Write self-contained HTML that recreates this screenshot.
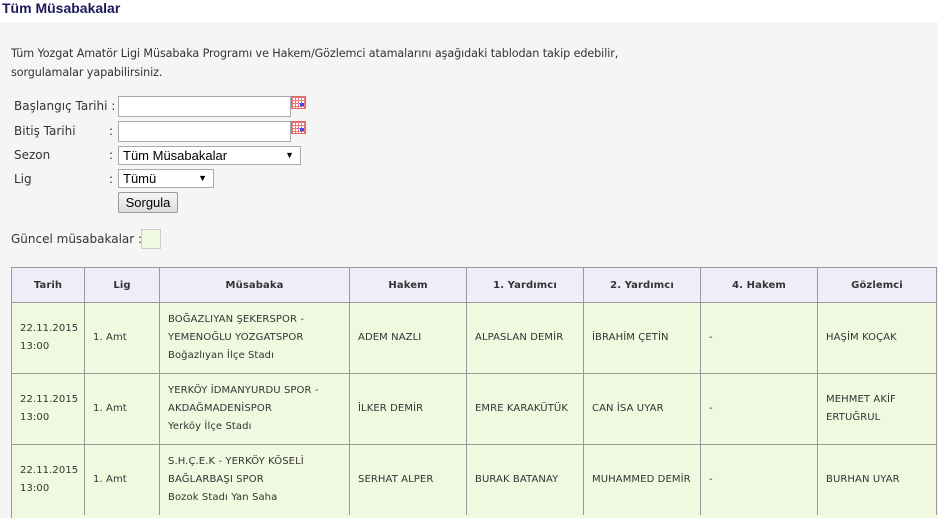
<!DOCTYPE html>
<html style="width:938px;height:518px;overflow:hidden"><head><meta charset="utf-8"><style>
body{margin:0;width:938px;height:518px;overflow:hidden;background:#f5f5f5;font-family:"DejaVu Sans",Verdana,sans-serif;color:#333;position:relative}
.top{position:absolute;left:0;top:0;width:938px;height:22px;background:#fff}
.title{position:absolute;left:2px;top:0px;font:bold 14px "Liberation Sans",Arial,sans-serif;color:#1a1a5e}
.intro{position:absolute;left:11px;top:44px;font-size:11.2px;line-height:19px;color:#333;letter-spacing:-0.1px}
.lab{position:absolute;font-size:12px;color:#333}
.inp{position:absolute;background:#fff;border:1px solid #aaa;box-sizing:border-box}
.sel{position:absolute;background:#fff;border:1px solid #aaa;box-sizing:border-box;font:13px "Liberation Sans",Arial,sans-serif;color:#000;padding:1px 0 0 4px}
.sel span{position:absolute;right:6px;top:3px;font-size:9px}
.cal{position:absolute;width:15px;height:13px;box-sizing:border-box;border:1px solid #d66;background:#fff;background-image:repeating-linear-gradient(90deg,#e77 0 1px,transparent 1px 3px),repeating-linear-gradient(#e77 0 1px,transparent 1px 3px)}
.cal:after{content:"";position:absolute;right:1px;bottom:2px;width:4px;height:3px;background:#44f}
.btn{position:absolute;left:118px;top:192px;width:60px;height:21px;box-sizing:border-box;border:1px solid #999;background:linear-gradient(#f7f7f7,#ddd);font:13px "Liberation Sans",Arial,sans-serif;text-align:center;line-height:19px;border-radius:2px;color:#000}
table{position:absolute;left:11px;top:267px;width:925px;border-collapse:collapse;table-layout:fixed;font-size:10px}
td,th{border:1px solid #999;padding:0 8px;letter-spacing:0.1px;white-space:nowrap;overflow:hidden}
th{background:#eeeefa;height:34px;font-weight:bold;text-align:center;color:#333}
td{background:#f0f8e0;height:70px;line-height:18px;text-align:left;vertical-align:middle}
</style></head><body>
<div class="top"></div>
<div class="title">Tüm Müsabakalar</div>
<div class="intro">Tüm Yozgat Amatör Ligi Müsabaka Programı ve Hakem/Gözlemci atamalarını aşağıdaki tablodan takip edebilir,<br>sorgulamalar yapabilirsiniz.</div>
<div class="lab" style="left:14px;top:99px">Başlangıç Tarihi :</div>
<div class="inp" style="left:118px;top:96px;width:173px;height:21px"></div>
<div class="cal" style="left:291px;top:96px"></div>
<div class="lab" style="left:14px;top:124px">Bitiş Tarihi</div><div class="lab" style="left:109px;top:124px">:</div>
<div class="inp" style="left:118px;top:121px;width:173px;height:21px"></div>
<div class="cal" style="left:291px;top:121px"></div>
<div class="lab" style="left:14px;top:148px">Sezon</div><div class="lab" style="left:109px;top:148px">:</div>
<div class="sel" style="left:118px;top:146px;width:183px;height:19px">Tüm Müsabakalar<span>▼</span></div>
<div class="lab" style="left:14px;top:172px">Lig</div><div class="lab" style="left:109px;top:172px">:</div>
<div class="sel" style="left:118px;top:169px;width:96px;height:19px">Tümü<span>▼</span></div>
<div class="btn">Sorgula</div>
<div class="lab" style="left:11px;top:232px">Güncel müsabakalar :</div>
<div style="position:absolute;left:141px;top:229px;width:20px;height:20px;box-sizing:border-box;border:1px solid #ccc;background:#f0f8e0"></div>
<table>
<colgroup><col style="width:73px"><col style="width:75px"><col style="width:190px"><col style="width:117px"><col style="width:117px"><col style="width:117px"><col style="width:117px"><col style="width:119px"></colgroup>
<tr><th>Tarih</th><th>Lig</th><th>Müsabaka</th><th>Hakem</th><th>1. Yardımcı</th><th>2. Yardımcı</th><th>4. Hakem</th><th>Gözlemci</th></tr>
<tr><td>22.11.2015<br>13:00</td><td>1. Amt</td><td>BOĞAZLIYAN ŞEKERSPOR -<br>YEMENOĞLU YOZGATSPOR<br>Boğazlıyan İlçe Stadı</td><td>ADEM NAZLI</td><td>ALPASLAN DEMİR</td><td>İBRAHİM ÇETİN</td><td>-</td><td>HAŞİM KOÇAK</td></tr>
<tr><td>22.11.2015<br>13:00</td><td>1. Amt</td><td>YERKÖY İDMANYURDU SPOR -<br>AKDAĞMADENİSPOR<br>Yerköy İlçe Stadı</td><td>İLKER DEMİR</td><td>EMRE KARAKÜTÜK</td><td>CAN İSA UYAR</td><td>-</td><td>MEHMET AKİF<br>ERTUĞRUL</td></tr>
<tr><td>22.11.2015<br>13:00</td><td>1. Amt</td><td>S.H.Ç.E.K - YERKÖY KÖSELİ<br>BAĞLARBAŞI SPOR<br>Bozok Stadı Yan Saha</td><td>SERHAT ALPER</td><td>BURAK BATANAY</td><td>MUHAMMED DEMİR</td><td>-</td><td>BURHAN UYAR</td></tr>
</table>
<div style="position:absolute;left:11px;top:515px;width:925px;height:3px;background:#f0f8e0;border-left:1px solid #999"></div>
</body></html>
